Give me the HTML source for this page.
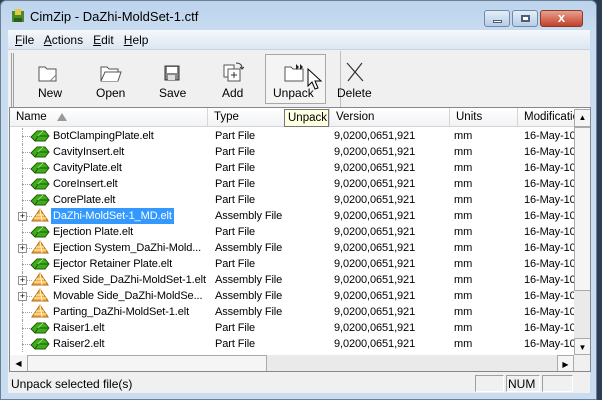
<!DOCTYPE html>
<html><head><style>
*{margin:0;padding:0;box-sizing:border-box}
body{width:602px;height:400px;overflow:hidden;background:#2b3d52;font-family:"Liberation Sans",sans-serif;font-size:12px;color:#000;position:relative}
.win{position:absolute;left:0;top:0;width:597px;height:400px;background:linear-gradient(#bcd3ec,#c9dcf0 30px,#c9dcf0);border-radius:6px 6px 0 0;border:1px solid #6b7f96}
.abs{position:absolute}
.client{position:absolute;left:8px;top:30px;width:582px;height:363px;background:#f0f0f0}
.btn{position:absolute;top:86px;text-align:center;font-size:12px}
.hdr{position:absolute;top:0;height:19px;background:linear-gradient(#fff,#f1f2f4);border-right:1px solid #d5d5d5;border-bottom:1px solid #d5d5d5;padding:3px 0 0 6px;font-size:11.5px}
.row{position:absolute;left:0;height:16px;width:600px;white-space:nowrap;font-size:11px;letter-spacing:-0.1px}
.row span{position:absolute;top:2px}
</style></head><body>
<div class="win">
 <svg class="abs" style="left:9px;top:8px" width="18" height="16"><rect x="2" y="2" width="12" height="11" fill="#4a8a2a"/><rect x="5" y="0" width="6" height="6" fill="#e8c840"/><rect x="4" y="9" width="8" height="4" fill="#2f5d1a"/></svg>
 <div class="abs" style="left:29px;top:8px;font-size:13px;color:#000">CimZip - DaZhi-MoldSet-1.ctf</div>
 <div class="abs" style="left:483px;top:9px;width:26px;height:17px;border:1px solid #6f8aa9;border-radius:3px;background:linear-gradient(#e3edf8,#b8cde6)"><div class="abs" style="left:8px;top:9px;width:9px;height:3px;background:#fff;border:1px solid #4a5f78"></div></div>
 <div class="abs" style="left:511px;top:9px;width:26px;height:17px;border:1px solid #6f8aa9;border-radius:3px;background:linear-gradient(#e3edf8,#b8cde6)"><div class="abs" style="left:8px;top:4px;width:9px;height:7px;border:2px solid #4a5f78;background:#fff"></div></div>
 <div class="abs" style="left:539px;top:9px;width:43px;height:17px;border:1px solid #8b3a2a;border-radius:3px;background:linear-gradient(#e9a08f,#c2412a)"><div class="abs" style="left:0;top:-1px;width:41px;text-align:center;color:#fff;font-weight:bold;font-size:13px">x</div></div>
</div>
<div class="client">
 <div class="abs" style="left:0;top:0;width:582px;height:19px;background:linear-gradient(#f5f8fc,#dde6f1)"></div>
 <div class="abs" style="left:7px;top:3px;font-size:12px;word-spacing:0"><u>F</u>ile&nbsp;&nbsp; <u>A</u>ctions&nbsp;&nbsp; <u>E</u>dit&nbsp;&nbsp; <u>H</u>elp</div>
 <div class="abs" style="left:0;top:19px;width:582px;height:1px;background:#c9d2dd"></div>
 <div class="abs" style="left:3px;top:23px;width:3px;height:54px;border-left:1px solid #a0a0a0;border-right:1px solid #a0a0a0"></div>
 <div class="abs" style="left:332px;top:21px;width:1px;height:56px;background:#c0c0c0"></div>
</div>
<!-- toolbar buttons -->
<div class="abs" style="left:265px;top:54px;width:61px;height:50px;border:1px solid #a8a8a8;background:#f4f4f4"></div>
<svg class="abs" style="left:38px;top:64px" width="20" height="18"><path d="M1 3h6l2 2h9v12H1z" fill="#fff" stroke="#555"/><path d="M12 17l6-6" stroke="#888"/></svg>
<svg class="abs" style="left:100px;top:64px" width="22" height="18"><path d="M1 3h6l2 2h9v12H1z" fill="#fff" stroke="#555"/><path d="M1 17l4-9h16l-3 9" fill="#fff" stroke="#555"/></svg>
<svg class="abs" style="left:164px;top:65px" width="16" height="16"><rect x="1" y="1" width="14" height="14" fill="#888" stroke="#333"/><rect x="3" y="2" width="10" height="6" fill="#fff"/><rect x="4" y="10" width="7" height="5" fill="#ddd"/></svg>
<svg class="abs" style="left:222px;top:61px" width="22" height="22"><rect x="2" y="4" width="10" height="12" fill="#fff" stroke="#555"/><rect x="6" y="8" width="12" height="12" fill="#fff" stroke="#555"/><path d="M9 14h6M12 11v6" stroke="#333"/><path d="M14 2c4 0 6 2 6 5M18 6l2 2 2-2" fill="none" stroke="#333"/></svg>
<svg class="abs" style="left:284px;top:63px" width="22" height="20"><path d="M1 4h6l2 2h10v12H1z" fill="#fff" stroke="#555"/><path d="M12 1l3 3-3 3zM16 1l3 3-3 3z" fill="#222"/></svg>
<svg class="abs" style="left:345px;top:62px" width="20" height="20"><path d="M2 1l16 18M17 1L3 19" stroke="#333" stroke-width="1.2"/></svg>
<div class="btn" style="left:38px">New</div>
<div class="btn" style="left:96px">Open</div>
<div class="btn" style="left:159px">Save</div>
<div class="btn" style="left:222px">Add</div>
<div class="btn" style="left:273px">Unpack</div>
<div class="btn" style="left:337px">Delete</div>
<svg class="abs" style="left:307px;top:68px" width="16" height="24"><path d="M1 1v17l4-4 3 7 3-1-3-7h6z" fill="#fff" stroke="#000"/></svg>
<!-- list -->
<div class="abs" style="left:9px;top:107px;width:582px;height:265px;background:#fff;border:1px solid #828790;overflow:hidden">
 <div class="hdr" style="left:0;width:198px">Name <span style="position:absolute;left:47px;top:5px;width:0;height:0;border-left:5px solid transparent;border-right:5px solid transparent;border-bottom:8px solid #9a9a9a"></span></div>
 <div class="hdr" style="left:198px;width:122px">Type</div>
 <div class="hdr" style="left:320px;width:120px">Version</div>
 <div class="hdr" style="left:440px;width:68px">Units</div>
 <div class="hdr" style="left:508px;width:60px">Modificatio</div>
 <div class="abs" style="left:274px;top:1px;width:45px;height:18px;background:#ffffe1;border:1px solid #767676;padding:2px 0 0 3px;font-size:11.5px">Unpack</div>
 <div id="rows"></div>
 <!-- vscroll -->
 <div class="abs" style="left:564px;top:1px;width:17px;height:246px;background:#eaeaea"></div>
 <div class="abs" style="left:564px;top:1px;width:17px;height:18px;background:#f5f5f5;border:1px solid #aaa;text-align:center;font-size:8px;padding-top:3px">▲</div>
 <div class="abs" style="left:564px;top:19px;width:17px;height:164px;background:#f5f5f5;border:1px solid #aaa"></div>
 <div class="abs" style="left:564px;top:230px;width:17px;height:17px;background:#f5f5f5;border:1px solid #aaa;text-align:center;font-size:8px;padding-top:4px">▼</div>
 <!-- hscroll -->
 <div class="abs" style="left:0;top:247px;width:564px;height:17px;background:#eaeaea"></div>
 <div class="abs" style="left:0;top:247px;width:17px;height:17px;background:#f5f5f5;text-align:center;font-size:8px;padding-top:4px">◀</div>
 <div class="abs" style="left:17px;top:247px;width:240px;height:17px;background:#f5f5f5;border:1px solid #aaa"></div>
 <div class="abs" style="left:547px;top:247px;width:17px;height:17px;background:#f5f5f5;border:1px solid #aaa;text-align:center;font-size:8px;padding-top:4px">▶</div>
 <div class="abs" style="left:564px;top:247px;width:17px;height:17px;background:#f0f0f0"></div>
</div>
<!-- status -->
<div class="abs" style="left:11px;top:377px;font-size:12px">Unpack selected file(s)</div>
<div class="abs" style="left:475px;top:375px;width:29px;height:17px;border:1px solid #a0a0a0;border-right-color:#fff;border-bottom-color:#fff"></div>
<div class="abs" style="left:506px;top:375px;width:34px;height:17px;border:1px solid #a0a0a0;border-right-color:#fff;border-bottom-color:#fff;padding:1px 0 0 1px">NUM</div>
<div class="abs" style="left:542px;top:375px;width:31px;height:17px;border:1px solid #a0a0a0;border-right-color:#fff;border-bottom-color:#fff"></div>
<script>
var d=[["BotClampingPlate.elt",0],["CavityInsert.elt",0],["CavityPlate.elt",0],["CoreInsert.elt",0],["CorePlate.elt",0],["DaZhi-MoldSet-1_MD.elt",1],["Ejection Plate.elt",0],["Ejection System_DaZhi-Mold...",1],["Ejector Retainer Plate.elt",0],["Fixed Side_DaZhi-MoldSet-1.elt",1],["Movable Side_DaZhi-MoldSe...",1],["Parting_DaZhi-MoldSet-1.elt",2],["Raiser1.elt",0],["Raiser2.elt",0]];
var h="";
var part='<svg style="position:absolute;left:20px;top:2px" width="20" height="12"><path d="M1 7l6-6h8l4 5-4 5H5z" fill="#3fae1a" stroke="#1d5a0a"/><path d="M5 11l3-5h10" fill="none" stroke="#1d5a0a"/><path d="M8 6l5-5" stroke="#8fe060"/></svg>';
var asm='<svg style="position:absolute;left:20px;top:0" width="20" height="15"><path d="M10 1L18 13H2z" fill="#f6b040" stroke="#b06a10"/><path d="M10 1L12 13M6 7h8M4 10h12" stroke="#fff6d0" fill="none"/></svg>';
d.forEach(function(r,i){
 var y=20+16*i;
 h+='<div class="row" style="top:'+y+'px">';
 h+='<div style="position:absolute;left:12px;top:0;height:16px;border-left:1px dotted #a0a0a0"></div><div style="position:absolute;left:12px;top:8px;width:10px;border-top:1px dotted #a0a0a0"></div>';
 if(r[1]==1)h+='<div style="position:absolute;left:8px;top:4px;width:9px;height:9px;border:1px solid #919191;background:#fff;font-size:9px;line-height:7px;text-align:center">+</div>';
 h+=(r[1]?asm:part);
 var sel=i==5;
 h+='<span style="left:'+(sel?41:43)+'px;'+(sel?'top:0;padding:2px 2px;background:#3399ff;color:#fff;':'')+'">'+r[0]+'</span>';
 h+='<span style="left:205px">'+(r[1]?'Assembly File':'Part File')+'</span>';
 h+='<span style="left:324px">9,0200,0651,921</span><span style="left:444px">mm</span><span style="left:514px">16-May-10</span></div>';
});
document.getElementById('rows').innerHTML=h;
</script>
</body></html>
